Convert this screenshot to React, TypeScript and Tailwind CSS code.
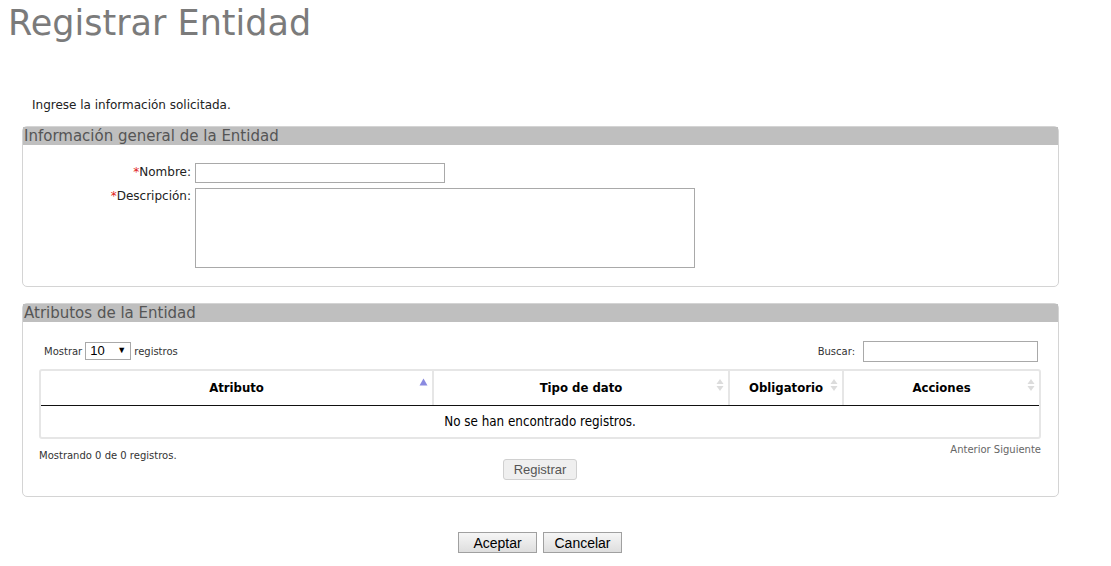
import React from 'react';

const SortBoth: React.FC = () => (
  <svg width="8" height="14" viewBox="0 0 8 14" className="shrink-0">
    <path d="M4 1 L7.5 6 L0.5 6 Z" fill="#dcdcdc" />
    <path d="M4 13 L7.5 8 L0.5 8 Z" fill="#dcdcdc" />
  </svg>
);

const SortAsc: React.FC = () => (
  <svg width="9" height="8" viewBox="0 0 9 8" className="shrink-0">
    <path d="M4.5 0.5 L8.5 7.5 L0.5 7.5 Z" fill="#8a8ae0" />
  </svg>
);

const Required: React.FC<{ label: string }> = ({ label }) => (
  <span>
    <span className="text-[#e02020]">*</span>
    {label}:
  </span>
);

const App: React.FC = () => {
  const columns = [
    { name: 'Atributo', width: 'w-[391px]', asc: true },
    { name: 'Tipo de dato', width: 'w-[296px]', asc: false },
    { name: 'Obligatorio', width: 'w-[114px]', asc: false },
    { name: 'Acciones', width: 'flex-1', asc: false },
  ];

  return (
    <div className="w-[1111px] min-h-[566px] bg-white text-[#222] font-['DejaVu_Sans',sans-serif]">
      <h1 className="pl-[8px] pt-[3px] text-[35px] leading-[40px] text-[#7b7b7b]">Registrar Entidad</h1>

      <p className="mt-[55px] pl-[32px] text-[12px] leading-[15px]">Ingrese la información solicitada.</p>

      {/* INFORMACION GENERAL */}
      <div className="mt-[13px] ml-[22px] w-[1037px] border border-[#d4d4d4] rounded-[5px]">
        <div className="h-[18px] bg-[#bfbfbf] text-[15px] leading-[18px] text-[#555] pl-[1px]">
          Información general de la Entidad
        </div>
        <div className="pt-[18px] pb-[18px] flex flex-col gap-[5px] text-[12px]">
          <div className="flex items-start gap-[4px]">
            <label className="w-[168px] text-right leading-[18px]">
              <Required label="Nombre" />
            </label>
            <input className="w-[250px] h-[20px] border border-[#a9a9a9] outline-none px-1" />
          </div>
          <div className="flex items-start gap-[4px]">
            <label className="w-[168px] text-right leading-[16px]">
              <Required label="Descripción" />
            </label>
            <textarea className="w-[500px] h-[80px] border border-[#a9a9a9] outline-none resize-none px-1" />
          </div>
        </div>
      </div>

      {/* ATRIBUTOS */}
      <div className="mt-[16px] ml-[22px] w-[1037px] border border-[#d4d4d4] rounded-[5px]">
        <div className="h-[18px] bg-[#bfbfbf] text-[15px] leading-[18px] text-[#555] pl-[1px]">
          Atributos de la Entidad
        </div>
        <div className="pt-[19px] pl-[16px] pr-[17px] pb-[16px]">
          <div className="flex justify-between items-start text-[10px] text-[#333]">
            <div className="flex items-center gap-[3px] pl-[5px] mt-[1px]">
              <span>Mostrar</span>
              <div className="w-[46px] h-[18px] border border-[#a9a9a9] flex items-center justify-between px-[4px] font-['Liberation_Sans',sans-serif] text-[13px] text-black">
                <span>10</span>
                <span className="text-[9px]">▼</span>
              </div>
              <span>registros</span>
            </div>
            <div className="flex items-center gap-[8px] pr-[3px]">
              <span>Buscar:</span>
              <input className="w-[175px] h-[21px] border border-[#a9a9a9] outline-none" />
            </div>
          </div>

          <div className="mt-[7px] border-2 border-[#e6e6e6] rounded-[3px]">
            <div className="flex h-[35px] border-b-[1.5px] border-[#111] text-[13px] font-bold text-black font-['DejaVu_Sans_Condensed','DejaVu_Sans',sans-serif]">
              {columns.map((c, i) => (
                <div
                  key={c.name}
                  className={`${c.width} relative flex items-center justify-center ${i > 0 ? 'border-l-2 border-[#e6e6e6]' : ''}`}
                >
                  <span>{c.name}</span>
                  <span className="absolute right-[4px] top-[7px]">
                    {c.asc ? <SortAsc /> : <SortBoth />}
                  </span>
                </div>
              ))}
            </div>
            <div className="h-[31px] flex items-center justify-center text-[13.3px] text-black font-['DejaVu_Sans_Condensed','DejaVu_Sans',sans-serif]">
              No se han encontrado registros.
            </div>
          </div>

          <div className="flex justify-between text-[10px] mt-[3px]">
            <span className="mt-[6px] text-[#333]">Mostrando 0 de 0 registros.</span>
            <span className="text-[#666]">Anterior Siguiente</span>
          </div>
          <div className="flex justify-center -mt-[4px]">
            <button className="w-[74px] h-[21px] rounded-[3px] border border-[#d0d0d0] bg-[#efefef] text-[13px] text-[#555] font-['Liberation_Sans',sans-serif]">
              Registrar
            </button>
          </div>
        </div>
      </div>

      <div className="mt-[35px] w-[1080px] flex justify-center gap-[6px]">
        <button className="w-[79px] h-[21px] border border-[#a0a0a0] bg-gradient-to-b from-[#f6f6f6] to-[#dedede] text-[14px] text-black font-['Liberation_Sans',sans-serif]">
          Aceptar
        </button>
        <button className="w-[79px] h-[21px] border border-[#a0a0a0] bg-gradient-to-b from-[#f6f6f6] to-[#dedede] text-[14px] text-black font-['Liberation_Sans',sans-serif]">
          Cancelar
        </button>
      </div>
    </div>
  );
};

export default App;
